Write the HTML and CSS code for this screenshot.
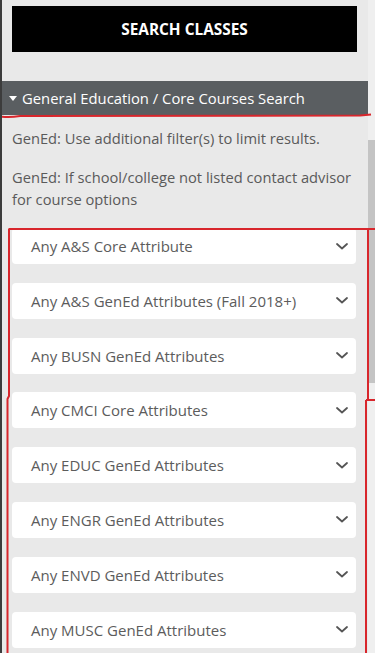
FILE: index.html
```html
<!DOCTYPE html>
<html lang="en">
<head>
<meta charset="utf-8">
<title>Search Classes</title>
<link rel="stylesheet" href="styles.css">
</head>
<body>
<div class="page">
  <main class="content">
    <button class="search-btn" type="button">SEARCH CLASSES</button>
    <div class="panel-header"><svg class="caret" viewBox="0 0 8 5"><path d="M0 0h8L4 5z"/></svg>General Education / Core Courses Search</div>
    <div class="panel-body">
      <p class="note">GenEd: Use additional filter(s) to limit results.</p>
      <p class="note">GenEd: If school/college not listed contact advisor for course options</p>
      <div class="selects">
        <div class="select"><span>Any A&amp;S Core Attribute</span><svg class="chev" viewBox="0 0 12 7"><path d="M1 1l5 4.5L11 1"/></svg></div>
        <div class="select"><span>Any A&amp;S GenEd Attributes (Fall 2018+)</span><svg class="chev" viewBox="0 0 12 7"><path d="M1 1l5 4.5L11 1"/></svg></div>
        <div class="select"><span>Any BUSN GenEd Attributes</span><svg class="chev" viewBox="0 0 12 7"><path d="M1 1l5 4.5L11 1"/></svg></div>
        <div class="select"><span>Any CMCI Core Attributes</span><svg class="chev" viewBox="0 0 12 7"><path d="M1 1l5 4.5L11 1"/></svg></div>
        <div class="select"><span>Any EDUC GenEd Attributes</span><svg class="chev" viewBox="0 0 12 7"><path d="M1 1l5 4.5L11 1"/></svg></div>
        <div class="select"><span>Any ENGR GenEd Attributes</span><svg class="chev" viewBox="0 0 12 7"><path d="M1 1l5 4.5L11 1"/></svg></div>
        <div class="select"><span>Any ENVD GenEd Attributes</span><svg class="chev" viewBox="0 0 12 7"><path d="M1 1l5 4.5L11 1"/></svg></div>
        <div class="select"><span>Any MUSC GenEd Attributes</span><svg class="chev" viewBox="0 0 12 7"><path d="M1 1l5 4.5L11 1"/></svg></div>
      </div>
    </div>
  </main>
  <div class="scrollbar"><div class="thumb"></div></div>
  <svg class="annotations" viewBox="0 0 375 653" width="375" height="653">
    <path d="M0 116.5 Q10 117.5 20 116 L360 115.5 Q366 115 371 114.5"/>
    <path d="M8.5 229 L375 229"/>
    <path d="M9 229 L9 396 L7.5 399 L7.5 653"/>
    <path d="M368 229 L368 400"/>
    <path d="M366 400 L375 400"/>
    <path d="M366 400 L366 653"/>
  </svg>
</div>
</body>
</html>
```
FILE: styles.css
```css
html, body {
  margin: 0;
  padding: 0;
}
body {
  background: #e9e9e9;
  font-family: "Open Sans", "Noto Sans", sans-serif;
  overflow: hidden;
}
.page {
  position: relative;
  display: flex;
  width: 375px;
  height: 653px;
  overflow: hidden;
  border-left: 2px solid #3c3c3c;
  box-sizing: border-box;
}
.content {
  width: 366px;
  padding-top: 6px;
}
.search-btn {
  display: block;
  width: 345px;
  height: 46px;
  margin: 0 0 0 10px;
  background: #000;
  color: #fff;
  border: none;
  font-family: "Open Sans", sans-serif;
  font-weight: 700;
  font-size: 15.4px;
  letter-spacing: 0;
}
.panel-header {
  margin-top: 29px;
  height: 34px;
  background: #5a5e61;
  color: #fff;
  font-size: 14.8px;
  display: flex;
  align-items: center;
  padding-left: 7px;
}
.caret {
  width: 8px;
  height: 5px;
  fill: #fff;
  margin-right: 5px;
}
.panel-body {
  padding: 0 10px;
}
.note {
  margin: 12px 0 0;
  font-size: 14.7px;
  line-height: 22px;
  color: #5a5a5a;
}
.note + .note {
  margin-top: 17px;
}
.selects {
  margin-top: 18px;
  display: flex;
  flex-direction: column;
  gap: 18.8px;
}
.select {
  height: 36px;
  width: 344px;
  box-sizing: border-box;
  background: #fff;
  border-radius: 4px;
  display: flex;
  align-items: center;
  justify-content: space-between;
  padding: 0 8px 0 19px;
  font-size: 15px;
  color: #5c5c5c;
}
.chev {
  width: 12px;
  height: 7px;
  fill: none;
  stroke: #555;
  stroke-width: 1.8;
  stroke-linecap: round;
  stroke-linejoin: round;
}
.scrollbar {
  width: 7px;
  background: #efefef;
}
.thumb {
  margin-top: 140px;
  height: 243px;
  background: #c4c4c4;
}
.annotations {
  position: absolute;
  left: -2px;
  top: 0;
  fill: none;
  stroke: #d8262c;
  stroke-width: 2;
  pointer-events: none;
}
```
